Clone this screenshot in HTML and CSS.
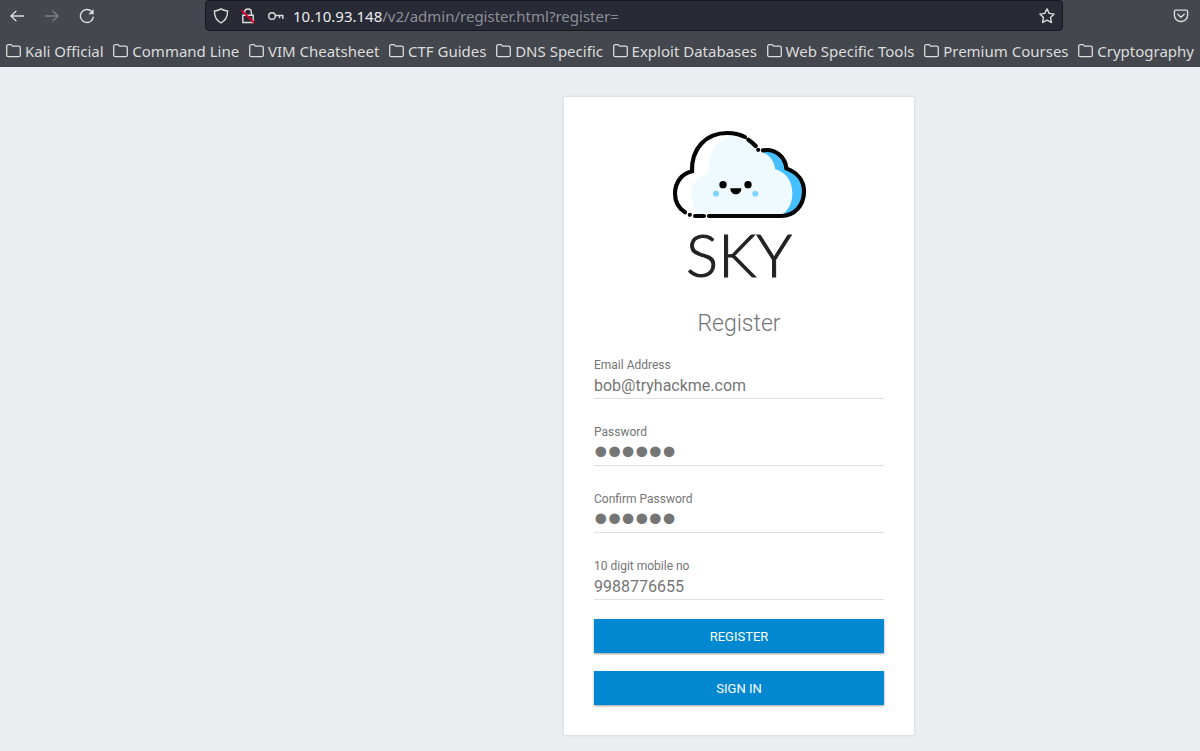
FILE: index.html
```html
<!DOCTYPE html>
<html lang="en">
<head>
<meta charset="utf-8">
<title>Register</title>
<link rel="stylesheet" href="styles.css">
</head>
<body>
<svg width="0" height="0" class="defs" aria-hidden="true">
  <symbol id="folder" viewBox="0 0 15 14"><path d="M.7 11.2V2.3Q.7 .7 2.3 .7h2.5q.7 0 1.1.6l.7.9h6q1.7 0 1.7 1.6v7.4q0 1.5-1.7 1.5H2.3Q.7 12.7.7 11.2z" fill="none" stroke="currentColor" stroke-width="1.3"/></symbol>
</svg>
<header class="browser">
  <div class="toolbar">
    <nav class="nav-buttons">
      <button class="tool" aria-label="Back"><svg width="16" height="16" viewBox="0 0 16 16"><path d="M15 8H2.200M7.400 2.800 2 8l5.400 5.200"/></svg></button>
      <button class="tool dim" aria-label="Forward"><svg width="16" height="16" viewBox="0 0 16 16"><path d="M1 8h12.800M8.600 2.800 14 8l-5.400 5.200"/></svg></button>
      <button class="tool" aria-label="Reload"><svg width="16" height="16" viewBox="0 0 16 16"><path d="M12.700 3.600A6.500 6.500 0 1 0 14.400 8.600"/><path d="M14.600 1v5.200H9.400z" fill="currentColor" stroke="none"/></svg></button>
    </nav>
    <div class="urlbar">
      <svg width="16" height="16" viewBox="0 0 16 16"><path d="M8 .9C6.200 2.200 4.200 2.800 1.400 3c0 5.500 2 9.500 6.600 12 4.600-2.500 6.600-6.500 6.600-12C11.800 2.800 9.800 2.200 8 .9z"/></svg>
      <svg width="16" height="16" viewBox="0 0 16 16"><path d="M4.600 7V4.400a3.400 3.400 0 0 1 6.800 0V7M2.800 7.200h10.400v7.300H2.800z"/><path d="M1.300 2.200 14.300 15" class="slash"/></svg>
      <svg width="18" height="16" viewBox="0 0 18 16"><circle cx="5" cy="8" r="3.300"/><path d="M8.300 7.500H16.500M12.500 7.500v2.700M15.800 7.500v3.400"/></svg>
      <p class="url"><span class="host">10.10.93.148</span>/v2/admin/register.html?register=</p>
      <button class="tool" aria-label="Bookmark this page"><svg width="16" height="16" viewBox="0 0 16 16"><path d="m8 .9 2.200 4.500 4.900.7-3.600 3.500.9 4.900L8 12.200l-4.400 2.300.9-4.900L.9 6.100l4.900-.7z" stroke-linejoin="round"/></svg></button>
    </div>
    <button class="tool" aria-label="Pocket"><svg width="16" height="16" viewBox="0 0 16 16"><path d="M2.800 2.100h10.400q1.400 0 1.400 1.400v3.800a6.600 6.200 0 0 1-13.200 0V3.500q0-1.400 1.400-1.400z"/><path d="m4.800 6.200 3.200 3 3.200-3" stroke-linecap="round"/></svg></button>
  </div>
  <nav class="bookmarks">
    <a href="#"><svg width="15" height="14"><use href="#folder"/></svg>Kali Official</a>
    <a href="#"><svg width="15" height="14"><use href="#folder"/></svg>Command Line</a>
    <a href="#"><svg width="15" height="14"><use href="#folder"/></svg>VIM Cheatsheet</a>
    <a href="#"><svg width="15" height="14"><use href="#folder"/></svg>CTF Guides</a>
    <a href="#"><svg width="15" height="14"><use href="#folder"/></svg>DNS Specific</a>
    <a href="#"><svg width="15" height="14"><use href="#folder"/></svg>Exploit Databases</a>
    <a href="#"><svg width="15" height="14"><use href="#folder"/></svg>Web Specific Tools</a>
    <a href="#"><svg width="15" height="14"><use href="#folder"/></svg>Premium Courses</a>
    <a href="#"><svg width="15" height="14"><use href="#folder"/></svg>Cryptography</a>
  </nav>
</header>
<main class="page">
  <form class="card">
    <div class="logo">
      <svg width="134" height="90" viewBox="38 30 402 270" role="img" aria-label="Smiling cloud">
        <path d="M98 154C96 85 140 39 204 39c32 0 58 12 88 44q10 8 32 7c30 2 54 25 57 55 35 13 53 39 53 69 0 42-28 74-69 74H110c-37 0-63-31-63-68 0-34 22-60 51-66z" fill="#fff"/>
        <path d="M148 161C143 100 174 54 218 48c28 3 52 18 70 38l24 8c30 15 58 48 69 51 35 13 53 39 53 69 0 42-28 74-69 74H121c-18-15-25-38-25-65 0-30 19-55 52-62z" fill="#eefaff"/>
        <path d="M304 94l20-4c30 2 54 25 57 55 35 13 53 39 53 69 0 42-28 74-69 74 24-18 34-40 34-68 0-38-20-63-51-72-4-25-17-44-44-54z" fill="#45bfff"/>
        <g fill="none" stroke="#050505" stroke-width="12.500" stroke-linecap="round">
          <path d="M77 277C56 264 47 243 47 220c0-34 22-60 51-66C96 85 140 39 204 39c19 0 37 4 53 12"/>
          <path d="M267 59q12 8 22 19M296.500 89.500h.1M311 91c38-6 67 20 70 54 35 13 53 39 53 69 0 42-28 74-69 74H149M134 288h-27M91.500 284.500h.1"/>
        </g>
        <circle cx="191" cy="194" r="11"/><circle cx="266" cy="194" r="11"/>
        <path d="M213 205h33c0 24-33 24-33 0z"/>
        <circle cx="170" cy="221" r="9" fill="#7fd4ff"/><circle cx="288" cy="221" r="9" fill="#7fd4ff"/>
      </svg>
      <span class="brand">SKY</span>
    </div>
    <h1>Register</h1>
    <div class="field"><label for="email">Email Address</label><input id="email" type="email" value="bob@tryhackme.com"></div>
    <div class="field"><label for="password">Password</label><input id="password" type="password" value="secret"></div>
    <div class="field"><label for="confirm">Confirm Password</label><input id="confirm" type="password" value="secret"></div>
    <div class="field"><label for="mobile">10 digit mobile no</label><input id="mobile" type="tel" value="9988776655"></div>
    <div class="actions">
      <button type="submit">REGISTER</button>
      <button type="button">SIGN IN</button>
    </div>
  </form>
</main>
</body>
</html>
```

FILE: styles.css
```css
* { box-sizing: border-box; }
body {
  margin: 0;
  min-height: 100vh;
  background: #eaeef1;
  font-family: Roboto, sans-serif;
  color: #757575;
}
.defs { position: absolute; }
svg { display: block; flex: none; }

.browser {
  background: #44474d;
  color: #dcdcdc;
  font-family: "Noto Sans", sans-serif;
  padding-bottom: 6px;
}
.toolbar {
  display: flex;
  align-items: center;
  padding: 0 11px 0 9px;
}
.toolbar svg { fill: none; stroke: currentColor; stroke-width: 1.4; }
.toolbar .slash { stroke: #e4002b; stroke-width: 1.8; }
.tool {
  padding: 0;
  border: 0;
  background: none;
  color: inherit;
}
.dim { color: #7c7e82; }
.nav-buttons { display: flex; gap: 19px; }
.urlbar {
  flex: 1;
  display: flex;
  align-items: center;
  gap: 11px;
  height: 31px;
  margin: 0 110px;
  padding: 0 7px;
  background: #282a35;
  border: 1px solid #17191d;
  border-radius: 4px;
}
.url {
  flex: 1;
  margin: 0 0 0 -3px;
  font-size: 15px;
  color: #8d8f95;
}
.host { color: #ececec; }
.bookmarks {
  display: flex;
  justify-content: space-between;
  padding: 10px 6px 0;
}
.bookmarks a {
  display: flex;
  align-items: center;
  gap: 4px;
  font-size: 15px;
  line-height: 20px;
  white-space: nowrap;
  color: inherit;
  text-decoration: none;
}

.page {
  display: flex;
  justify-content: center;
  padding: 30px 0 17px 278px;
}
.card {
  width: 350px;
  padding: 33px 30px 30px;
  background: #fff;
  box-shadow: 0 0 2px 1px #d9dcdf;
}
.logo {
  display: flex;
  flex-direction: column;
  align-items: center;
}
.brand {
  font: 300 60px/68px Lato, sans-serif;
  color: #222;
  -webkit-text-stroke: 1px #222;
}
h1 {
  margin: 20px 0 17px;
  font-size: 23px;
  font-weight: 300;
  line-height: 32px;
  text-align: center;
}
.field { margin-bottom: 25px; }
label {
  display: block;
  font-size: 12px;
  line-height: 16px;
}
input {
  display: block;
  width: 100%;
  height: 26px;
  padding: 0 0 1px;
  border: 0;
  border-bottom: 1px solid #e0e0e0;
  background: none;
  color: #757575;
  font: 16px/24px Roboto, sans-serif;
}
input[type="password"] { font: 39px/24px "Liberation Sans", sans-serif; }
.actions {
  display: grid;
  gap: 18px;
  margin-top: -6px;
}
.actions button {
  height: 34px;
  border: 0;
  background: #0288d1;
  color: #fff;
  font: 13px Roboto, sans-serif;
  box-shadow: 0 1px 2px #0006;
}
```
